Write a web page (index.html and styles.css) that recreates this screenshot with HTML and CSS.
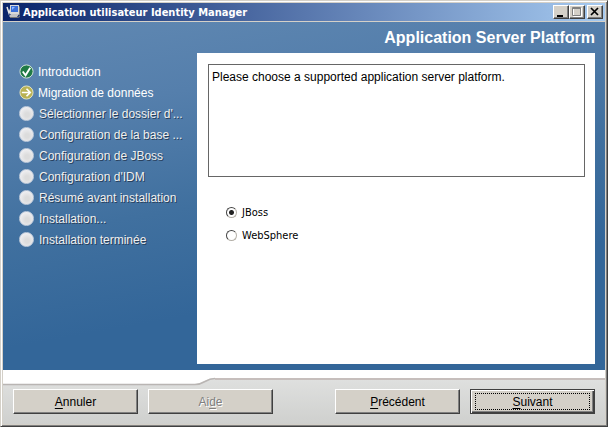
FILE: index.html
```html
<!DOCTYPE html>
<html lang="fr">
<head>
    <meta charset="UTF-8">
    <meta name="viewport" content="width=device-width, initial-scale=1.0">
    <title>Application utilisateur Identity Manager</title>
    <link rel="stylesheet" href="styles.css">
</head>
<body>
    <div class="window">
        <header class="titlebar">
            <svg class="app-icon" width="16" height="16" viewBox="0 0 16 16">
                <path d="M1 3l2 6 2-5" fill="none" stroke="#e8e8e8" stroke-width="1.5"/>
                <rect x="4" y="1" width="9" height="9" fill="#d8d8d8"/>
                <rect x="5" y="2" width="7" height="6" fill="#3a6fd8"/>
                <path d="M6 3h3l-3 3z" fill="#8fb8ff"/>
                <path d="M13 2l1 1v8h-3v-1h2z" fill="#777"/>
                <path d="M3 12l2-2h8l-2 3H4z" fill="#c4c4c4"/>
                <path d="M4 13h8l2-2v2l-2 1H4z" fill="#777"/>
            </svg>
            <span class="title">Application utilisateur Identity Manager</span>
            <div class="window-buttons">
                <button class="win-btn" type="button" aria-label="Réduire">
                    <svg width="14" height="12" viewBox="0 0 14 12"><path d="M3 9h6v2H3z" fill="#000"/></svg>
                </button>
                <button class="win-btn" type="button" aria-label="Agrandir" disabled>
                    <svg width="14" height="12" viewBox="0 0 14 12">
                        <path d="M3.5 2v8.5h8V2" fill="none" stroke="#fff"/>
                        <path d="M2.5 1.5h8v8h-8zM2.5 2.5h8" fill="none" stroke="#808080"/>
                    </svg>
                </button>
                <button class="win-btn close" type="button" aria-label="Fermer">
                    <svg width="14" height="12" viewBox="0 0 14 12"><path d="M3 2l7 7M10 2L3 9" stroke="#000" stroke-width="1.7"/></svg>
                </button>
            </div>
        </header>

        <main class="content">
            <h1>Application Server Platform</h1>
            <div class="columns">
                <ol class="steps">
                    <li class="step done">
                        <svg class="bullet" width="16" height="16" viewBox="0 0 16 16">
                            <circle cx="8" cy="8" r="7" fill="#1f7a45" stroke="#d5e6dc"/>
                            <path d="M4 8l3 4 5-8" fill="none" stroke="#fff" stroke-width="2"/>
                        </svg>
                        Introduction
                    </li>
                    <li class="step current">
                        <svg class="bullet" width="16" height="16" viewBox="0 0 16 16">
                            <circle cx="8" cy="8" r="7" fill="#b9b254" stroke="#e6e6c8"/>
                            <path d="M3 8h9M8 4l4 4-4 4" fill="none" stroke="#fff" stroke-width="1.8"/>
                        </svg>
                        Migration de données
                    </li>
                    <li class="step"><span class="bullet ball"></span>Sélectionner le dossier d'...</li>
                    <li class="step"><span class="bullet ball"></span>Configuration de la base ...</li>
                    <li class="step"><span class="bullet ball"></span>Configuration de JBoss</li>
                    <li class="step"><span class="bullet ball"></span>Configuration d'IDM</li>
                    <li class="step"><span class="bullet ball"></span>Résumé avant installation</li>
                    <li class="step"><span class="bullet ball"></span>Installation...</li>
                    <li class="step"><span class="bullet ball"></span>Installation terminée</li>
                </ol>

                <section class="panel">
                    <textarea class="message" readonly aria-label="Message">Please choose a supported application server platform.</textarea>
                    <div class="options">
                        <label class="option"><input type="radio" name="platform" checked>JBoss</label>
                        <label class="option"><input type="radio" name="platform">WebSphere</label>
                    </div>
                </section>
            </div>
        </main>

        <footer>
            <div class="edge">
                <svg class="edge-curve" width="212" height="16" viewBox="0 0 212 16">
                    <path d="M0 0H212V8C202 8 202 14 192 14H0z" fill="#fff"/>
                    <path d="M212 8.5C202 8.5 202 14.5 192 14.5H0" fill="none" stroke="#b9b5b3" stroke-width="1.5"/>
                </svg>
                <div class="edge-line"></div>
            </div>
            <div class="buttons">
                <button class="btn" type="button"><span><u>A</u>nnuler</span></button>
                <button class="btn" type="button" disabled><span>Ai<u>d</u>e</span></button>
                <button class="btn previous" type="button"><span><u>P</u>récédent</span></button>
                <button class="btn default" type="button"><span><u>S</u>uivant</span></button>
            </div>
        </footer>
    </div>
</body>
</html>
```
FILE: styles.css
```css
:root {
    --face: #d4d0c8;
    --shadow: #808080;
    --dark: #404040;
    --blue: #336699;
}

* {
    box-sizing: border-box;
}

body {
    margin: 0;
    font-family: "Liberation Sans", Arial, sans-serif;
    font-size: 12px;
}

.window {
    display: flex;
    flex-direction: column;
    min-height: 100vh;
    padding: 1px;
    background: var(--face);
    border: 1px solid;
    border-color: var(--face) var(--dark) var(--dark) var(--face);
    box-shadow: inset 1px 1px #fff, inset -1px -1px var(--shadow);
}

/* Title bar */
.titlebar {
    display: flex;
    align-items: center;
    height: 18px;
    margin: 1px 1px 0;
    padding: 0 2px 0 3px;
    background: linear-gradient(to right, #0a246a, #a6caf0);
}

.title {
    flex: 1;
    margin-left: 1px;
    color: #fff;
    font-family: "DejaVu Sans Condensed", "DejaVu Sans", sans-serif;
    font-stretch: condensed;
    font-size: 11px;
    font-weight: bold;
    white-space: nowrap;
}

.window-buttons {
    display: flex;
}

.win-btn {
    display: flex;
    width: 16px;
    height: 14px;
    padding: 0;
    background: var(--face);
    border: 1px solid;
    border-color: #fff var(--dark) var(--dark) #fff;
    box-shadow: inset -1px -1px var(--shadow);
}

.close {
    margin-left: 2px;
}

/* Blue area */
.content {
    flex: 1;
    display: flex;
    flex-direction: column;
    margin: 0 1px;
    padding: 0 10px 6px 16px;
    border-top: 1px solid var(--face);
    background: linear-gradient(170deg, #6088b2 0%, #557fac 22%, #40709f 48%, var(--blue) 72%);
}

h1 {
    margin: 0;
    padding: 6px 0;
    color: #fff;
    font-size: 16px;
    line-height: 19px;
    text-align: right;
}

.columns {
    flex: 1;
    display: flex;
}

.steps {
    flex: none;
    width: 178px;
    margin: 0;
    padding: 8px 0 0;
    list-style: none;
}

.step {
    display: flex;
    align-items: center;
    gap: 5px;
    height: 21px;
    color: #f0f0f0;
    text-shadow: 1px 1px #28405c;
    white-space: nowrap;
}

.done,
.current {
    gap: 4px;
    color: #fff;
    text-shadow: none;
}

.bullet {
    flex: none;
    width: 15px;
    height: 15px;
}

.ball {
    border: 1px solid #c3cedd;
    border-radius: 50%;
    background: radial-gradient(circle at 55% 60%, #dcdcdc 20%, #f2f2f5 80%);
}

/* White panel */
.panel {
    flex: 1;
    padding: 11px 10px 11px 11px;
    background: #fff;
}

.message {
    display: block;
    width: 100%;
    height: 113px;
    margin: 0;
    padding: 4px 3px;
    border: 1px solid #666;
    outline: none;
    resize: none;
    background: #fff;
    color: #000;
    font: 12px/16px "Liberation Sans", Arial, sans-serif;
}

.options {
    display: flex;
    flex-direction: column;
    padding: 24px 18px;
}

.option {
    display: flex;
    align-items: center;
    gap: 5px;
    height: 23px;
    font-family: "DejaVu Sans Condensed", "DejaVu Sans", sans-serif;
    font-stretch: condensed;
    font-size: 11px;
}

.option input {
    appearance: none;
    width: 11px;
    height: 11px;
    margin: 0;
    border: 1px solid;
    border-color: #444 #b4b0a8 #b4b0a8 #444;
    border-radius: 50%;
    background: #fff;
}

.option input:checked {
    background: radial-gradient(circle, #222 2px, #fff 3px);
}

/* Bottom bar */
footer {
    margin: 0 1px 1px;
    background: linear-gradient(#e2e3e2, #cfd0ce);
}

.edge {
    display: flex;
}

.edge-curve {
    flex: none;
}

.edge-line {
    flex: 1;
    height: 10px;
    background: #fff;
    border-bottom: 2px solid #c6bebc;
}

.buttons {
    display: flex;
    gap: 10px;
    padding: 3px 10px 10px;
}

.btn {
    flex: 0 1 125px;
    height: 25px;
    padding: 0;
    background: var(--face);
    border: 1px solid;
    border-color: #fff var(--dark) var(--dark) #fff;
    box-shadow: inset -1px -1px var(--shadow);
    color: #000;
    font: 12px "Liberation Sans", Arial, sans-serif;
}

.btn u {
    text-underline-offset: 2px;
}

.btn:disabled {
    color: var(--shadow);
    text-shadow: 1px 1px #fff;
}

.previous {
    margin-left: auto;
}

.default {
    padding: 2px;
    border-color: var(--dark);
    box-shadow: inset 1px 1px #fff, inset -1px -1px var(--dark), inset -2px -2px var(--shadow);
}

.default span {
    display: flex;
    align-items: center;
    justify-content: center;
    height: 17px;
    margin: 0 2px;
    border: 1px dotted #000;
}
```
